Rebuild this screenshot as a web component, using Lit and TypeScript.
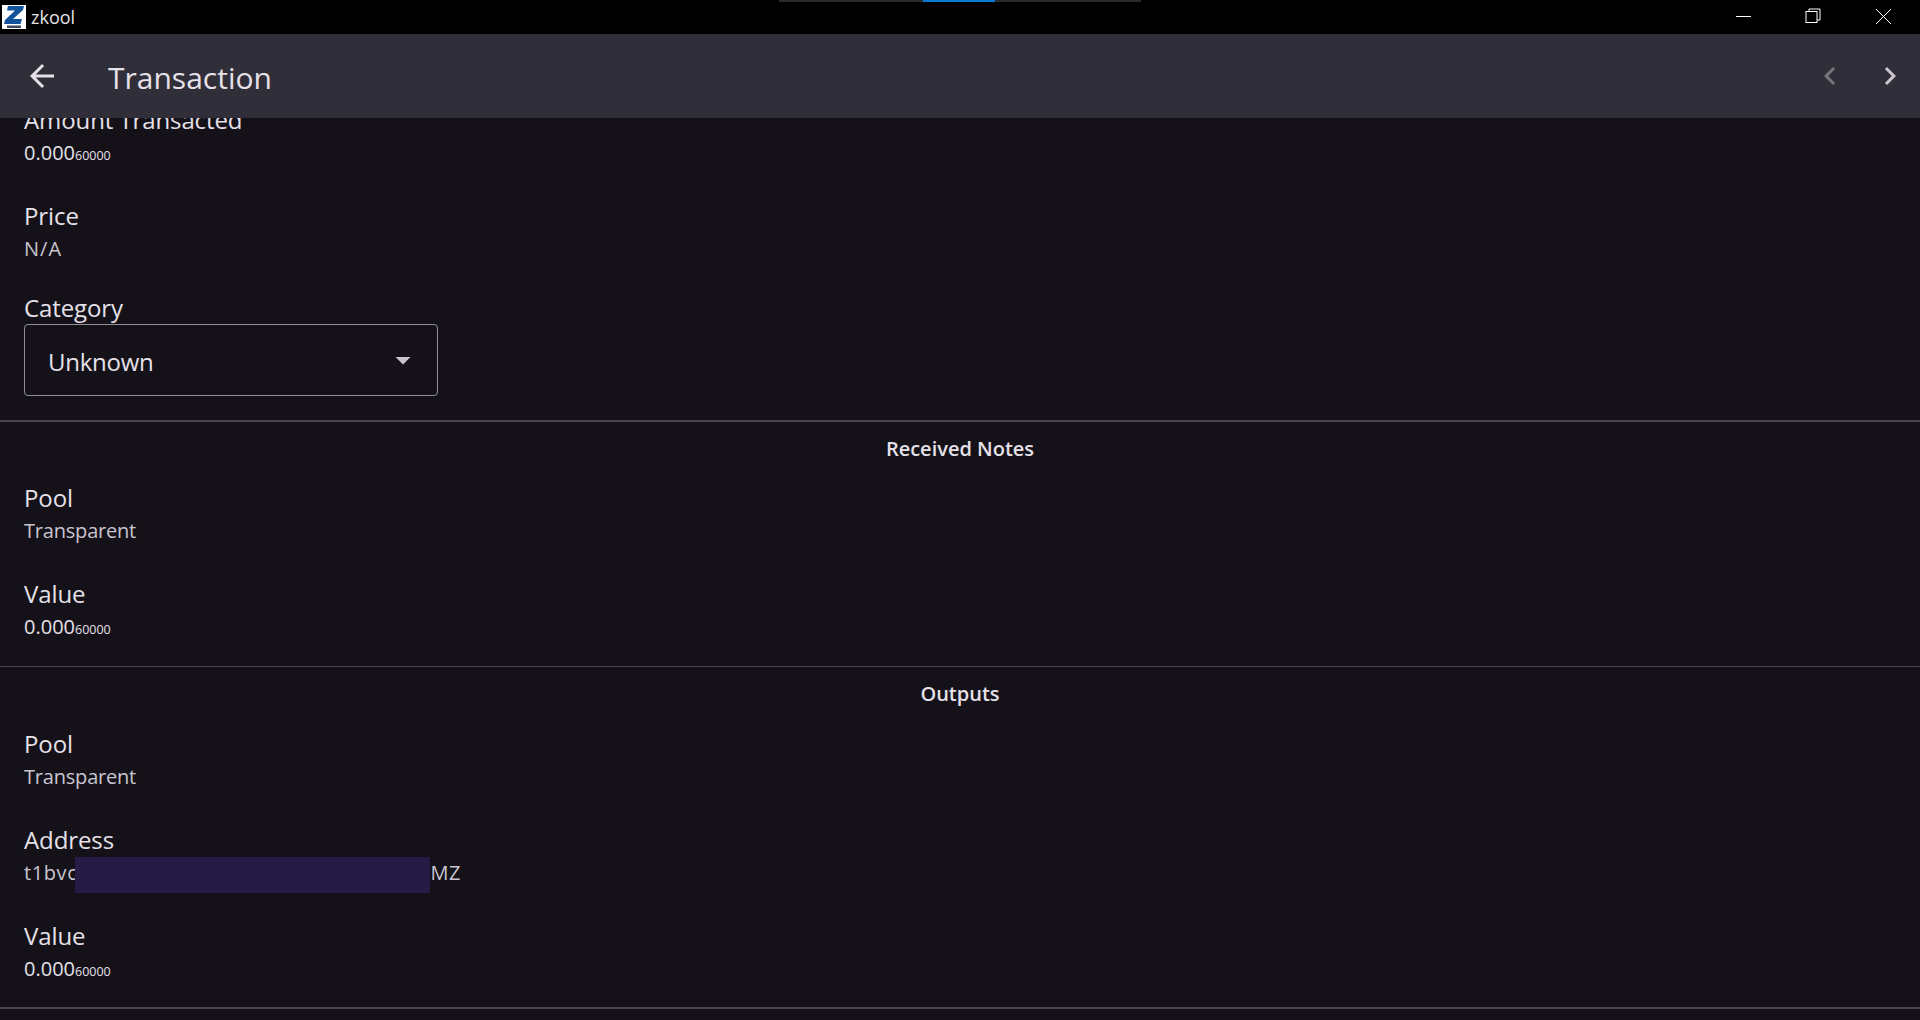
import { LitElement, html, css } from "lit";
import { customElement } from "lit/decorators.js";

@customElement("app-root")
export class AppRoot extends LitElement {
  static styles = css`
    :host { display: flex; flex-direction: column; width: 1920px; height: 1020px; overflow: hidden; background: #141218; font-family: "Open Sans", "Noto Sans", sans-serif; color: #e6e0e9; position: relative; }
    .titlebar { height: 34px; flex: none; background: #000; display: flex; align-items: center; color: #e4e4e4; font-size: 18px; position: relative; }
    .logo { width: 24px; height: 24px; margin: 0 5px 0 2px; display: block; }
    .name { margin-top: -1px; }
    .progress { position: absolute; top: 0; left: 779px; width: 362px; height: 2px; background: #2b2b2b; display: flex; justify-content: center; }
    .progress i { display: block; width: 72px; height: 2px; background: #0a78d6; margin-left: -2px; }
    .winbtns { margin-left: auto; margin-right: 2px; display: flex; }
    .winbtns button { all: unset; width: 70px; height: 34px; display: flex; align-items: center; justify-content: center; }
    .winbtns svg { width: 16px; height: 16px; display: block; margin-top: -2px; }
    .appbar { height: 84px; flex: none; background: #302e38; display: flex; align-items: center; position: relative; z-index: 1; }
    .back { width: 36px; height: 36px; margin-left: 24px; display: block; }
    .title { margin-left: 48px; font-size: 30px; color: #e6e0e9; line-height: 40px; margin-top: 3px; }
    .actions { margin-left: auto; display: flex; gap: 24px; margin-right: 12px; }
    .actions svg { width: 36px; height: 36px; display: block; }
    .scroll { flex: 1; overflow: hidden; min-height: 0; }
    .inner { margin-top: -23px; display: flex; flex-direction: column; }
    .field { padding: 9.5px 24px 0; height: 96px; box-sizing: border-box; flex: none; }
    .label { font-size: 24px; line-height: 30px; letter-spacing: -0.1px; color: #e6e0e9; }
    .value { font-size: 20px; line-height: 26px; margin-top: 5px; color: #cac4d0; letter-spacing: -0.2px; display: flex; align-items: baseline; }
    .value.amount { color: #e6e0e9; letter-spacing: 0; }
    .value.addr { letter-spacing: 0.6px; }
    .value.na { letter-spacing: 1px; }
    .value small { font-size: 12.5px; letter-spacing: 0; }
    .redact { display: block; width: 355px; height: 36px; background: #251b45; margin: -2.5px 0 -7.5px -2px; flex: none; align-self: flex-start; }
    .cat { padding: 9px 24px 0; height: 133px; box-sizing: border-box; flex: none; }
    .cat .label { line-height: 24px; }
    .select { box-sizing: border-box; width: 414px; height: 72px; margin-top: 4px; border: 1.5px solid #938f99; border-radius: 4px; display: flex; align-items: center; padding: 0 16px 0 23px; font-size: 24px; letter-spacing: -0.25px; color: #e6e0e9; }
    .select span { margin-top: 3px; }
    .select svg { width: 36px; height: 36px; margin-left: auto; display: block; }
    hr { border: 0; height: 1.5px; background: #49454f; margin: 0; width: 100%; flex: none; }
    .head { text-align: center; font-size: 20px; font-weight: 600; line-height: 28px; color: #e6e0e9; padding: 13px 0 0; height: 52px; box-sizing: border-box; flex: none; }
  `;

  private amount() {
    return html`<div class="value amount">0.000<small>60000</small></div>`;
  }

  render() {
    return html`
      <div class="titlebar">
        <svg class="logo" viewBox="0 0 24 24">
          <rect width="24" height="24" fill="#fff"/>
          <path d="M6 1h16l-1 4L11 14h9l-1.500 5H2l1-4 10-9.500H5z" fill="#12539b"/>
          <rect x="5" y="20.500" width="14" height="2.500" fill="#3b4a60"/>
        </svg>
        <span class="name">zkool</span>
        <div class="progress"><i></i></div>
        <div class="winbtns">
          <button aria-label="Minimize"><svg viewBox="0 0 16 16"><path d="M1 8.500h15" stroke="#fff" fill="none"/></svg></button>
          <button aria-label="Restore"><svg viewBox="0 0 16 16"><rect x="1" y="3.500" width="11" height="11" stroke="#fff" fill="none"/><path d="M4 3.500V1h11v11h-3" stroke="#fff" fill="none"/></svg></button>
          <button aria-label="Close"><svg viewBox="0 0 16 16"><path d="M1 1l15 15M16 1L1 16" stroke="#fff" fill="none"/></svg></button>
        </div>
      </div>
      <div class="appbar">
        <svg class="back" viewBox="0 0 24 24"><path d="M20 11H7.830l5.590-5.590L12 4l-8 8 8 8 1.410-1.410L7.830 13H20z" fill="#e6e0e9"/></svg>
        <div class="title">Transaction</div>
        <div class="actions">
          <svg viewBox="0 0 24 24"><path d="M15.410 7.410 14 6l-6 6 6 6 1.410-1.410L10.830 12z" fill="#77747e"/></svg>
          <svg viewBox="0 0 24 24"><path d="M10 6 8.590 7.410 13.170 12l-4.580 4.590L10 18l6-6z" fill="#cac4d0"/></svg>
        </div>
      </div>
      <div class="scroll">
        <div class="inner">
          <div class="field"><div class="label">Amount Transacted</div>${this.amount()}</div>
          <div class="field"><div class="label">Price</div><div class="value na">N/A</div></div>
          <div class="cat">
            <div class="label">Category</div>
            <div class="select"><span>Unknown</span><svg viewBox="0 0 24 24"><path d="M7 10l5 5 5-5z" fill="#cac4d0"/></svg></div>
          </div>
          <hr />
          <div class="head">Received Notes</div>
          <div class="field"><div class="label">Pool</div><div class="value">Transparent</div></div>
          <div class="field"><div class="label">Value</div>${this.amount()}</div>
          <hr />
          <div class="head">Outputs</div>
          <div class="field"><div class="label">Pool</div><div class="value">Transparent</div></div>
          <div class="field"><div class="label">Address</div><div class="value addr">t1bvc<span class="redact"></span>MZ</div></div>
          <div class="field"><div class="label">Value</div>${this.amount()}</div>
          <hr />
        </div>
      </div>
    `;
  }
}
